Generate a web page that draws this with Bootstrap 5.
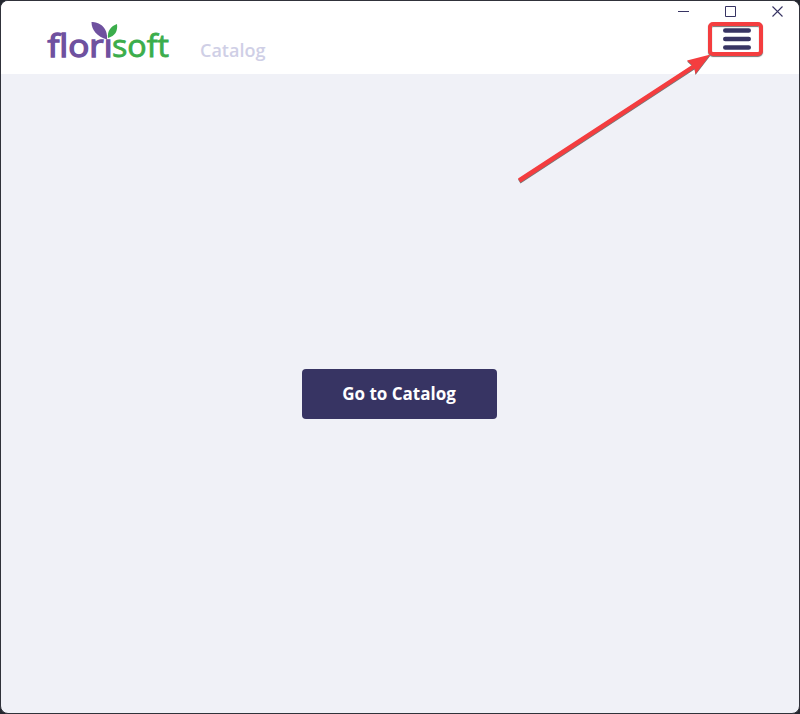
<!DOCTYPE html>
<html lang="en">
<head>
<meta charset="utf-8">
<meta name="viewport" content="width=device-width, initial-scale=1">
<title>Florisoft Catalog</title>
<link href="https://cdn.jsdelivr.net/npm/bootstrap@5.3.0/dist/css/bootstrap.min.css" rel="stylesheet">
<style>
:root { --ink: #373463; --accent: #f43d3f; }
body { background: #24272f; font-family: "Open Sans", "Noto Sans", sans-serif; }
.app-window { border: 1px solid #30323a; border-radius: 8px; background: #f0f1f7; }
.app-header { height: 73px; padding-left: 44px; }
.brand-logo { width: 128px; height: 50px; margin-top: 19px; overflow: visible; }
.brand-logo text { font: 400 30.5px "Open Sans", sans-serif; }
.page-link-title { color: #cfcfe6; font-size: 18px; font-weight: 600; line-height: 24px; margin: 37px 0 0 27px; }
.window-buttons { height: 19px; gap: 35px; padding-right: 15px; margin-bottom: 2px; }
.menu-button { width: 55px; height: 34px; margin-right: 36px; border: 4px solid var(--accent); border-radius: 5px; box-shadow: 0 1px 1px #777, inset 0 1px 1px #777; }
.menu-button svg { margin-left: 3px; }
.btn-catalog { --bs-btn-bg: var(--ink); --bs-btn-color: #fff; --bs-btn-hover-bg: #29264f; --bs-btn-hover-color: #fff; width: 195px; height: 50px; border-radius: 4px; font-size: 17px; font-weight: 700; margin-right: 2px; }
.pointer-arrow { filter: drop-shadow(0 1px .5px #777); pointer-events: none; }
</style>
</head>
<body>
<div class="app-window vh-100 d-flex flex-column overflow-hidden position-relative">
  <header class="app-header bg-white d-flex align-items-start flex-shrink-0">
    <a href="#" aria-label="florisoft">
      <svg class="brand-logo d-block" viewBox="45 20 128 50">
        <text x="47.500" y="57.300" fill="#6f519f" stroke="#6f519f" stroke-width="1.300" textLength="65" lengthAdjust="spacingAndGlyphs">florı</text>
        <text x="112" y="57.300" fill="#3bad4b" stroke="#3bad4b" stroke-width=".8" textLength="57" lengthAdjust="spacingAndGlyphs">soft</text>
        <path d="M91.500 22C99 22 108 27 107 39.500C97 36.500 91.500 30 91.500 22Z" fill="#6f519f"/>
        <path d="M117 24C118 31 115 36 108 38C107 31 111 26 117 24Z" fill="#3bad4b"/>
      </svg>
    </a>
    <span class="page-link-title">Catalog</span>
    <div class="ms-auto d-flex flex-column align-items-end">
      <div class="window-buttons d-flex align-items-center">
        <svg width="12" height="12" fill="none" stroke="#373463"><path d="M0 6.500H11"/></svg>
        <svg width="12" height="12" fill="none" stroke="#373463"><path d="M.5 1.500H10.500V11.500H.5Z"/></svg>
        <svg width="12" height="12" fill="none" stroke="#373463" stroke-width="1.100"><path d="M.5 1.500L10.500 11.500M10.500 1.500L.5 11.500"/></svg>
      </div>
      <button class="menu-button bg-white p-0 d-flex align-items-center justify-content-center" aria-label="Menu">
        <svg width="29" height="24" stroke="#373463" stroke-width="4.600" stroke-linecap="round"><path d="M2.300 3.500H25.700M2.300 12H25.700M2.300 20.500H25.700"/></svg>
      </button>
    </div>
  </header>
  <main class="flex-grow-1 d-flex align-items-center justify-content-center">
    <button class="btn btn-catalog border-0 p-0">Go to Catalog</button>
  </main>
  <svg class="pointer-arrow position-absolute top-0 start-0" width="798" height="200" viewBox="1 1 798 200" fill="#f43d3f">
    <path d="M518 178.500L692 65L687 60.500L710.500 54.500L695.500 74L694.500 68.500L520.500 182.500Z"/>
  </svg>
</div>
<script src="https://cdn.jsdelivr.net/npm/bootstrap@5.3.0/dist/js/bootstrap.bundle.min.js"></script>
</body>
</html>
